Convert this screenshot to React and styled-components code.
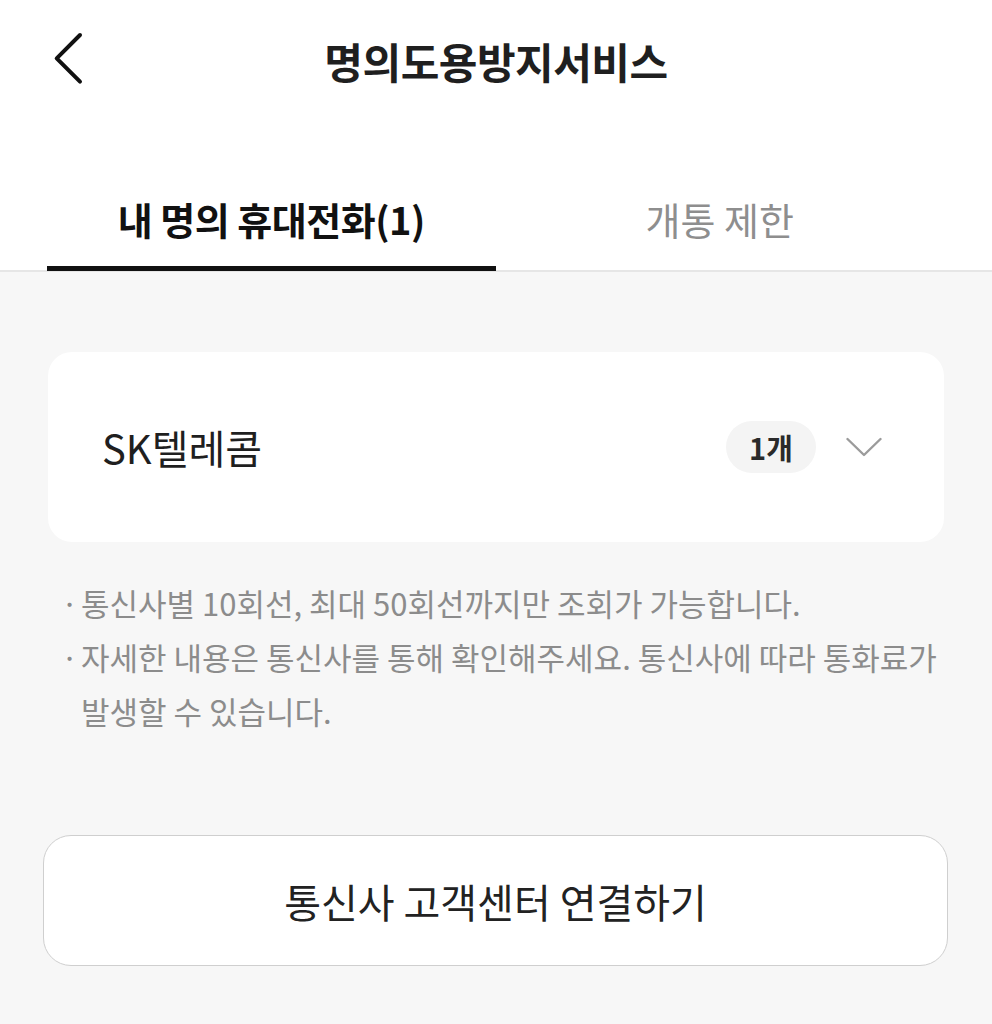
import React, { useState } from 'react';
import styled, { createGlobalStyle } from 'styled-components';

const GlobalStyle = createGlobalStyle`
  html, body {
    margin: 0;
    padding: 0;
    background: #f7f7f7;
  }
  body {
    font-family: "Noto Sans CJK KR", "Noto Sans", sans-serif;
    color: #1f1f1f;
  }
`;

const tabs = ['내 명의 휴대전화(1)', '개통 제한'];

const notes = [
  '통신사별 10회선, 최대 50회선까지만 조회가 가능합니다.',
  '자세한 내용은 통신사를 통해 확인해주세요. 통신사에 따라 통화료가 발생할 수 있습니다.',
];

function App() {
  const [active, setActive] = useState(0);

  return (
    <Page>
      <GlobalStyle />
      <Top>
        <Header>
          <BackButton aria-label="뒤로">
            <svg width="40" height="60" viewBox="0 0 40 60" fill="none">
              <path
                d="M36 9 L12.7 32.3 L36 55.7"
                stroke="#111"
                strokeWidth="4"
                strokeLinecap="round"
                strokeLinejoin="round"
              />
            </svg>
          </BackButton>
          <Title>명의도용방지서비스</Title>
        </Header>
        <TabBar>
          {tabs.map((label, i) => (
            <Tab key={label} $active={active === i} onClick={() => setActive(i)}>
              {label}
            </Tab>
          ))}
        </TabBar>
      </Top>

      <Content>
        <CarrierCard>
          <CarrierName>SK텔레콤</CarrierName>
          <CardRight>
            <CountBadge>1개</CountBadge>
            <svg width="36" height="20" viewBox="0 0 36 20" fill="none">
              <path
                d="M1.5 2 L18 18 L34.5 2"
                stroke="#9b9b9b"
                strokeWidth="2.4"
                strokeLinecap="round"
                strokeLinejoin="round"
              />
            </svg>
          </CardRight>
        </CarrierCard>

        <NoteList>
          {notes.map((n) => (
            <Note key={n}>{n}</Note>
          ))}
        </NoteList>

        <OutlineButton>통신사 고객센터 연결하기</OutlineButton>
      </Content>
    </Page>
  );
}

export default App;

const Page = styled.div`
  width: 992px;
  min-height: 1024px;
  background: #f7f7f7;
`;

const Top = styled.div`
  background: #fff;
`;

const Header = styled.header`
  position: relative;
  height: 120px;
  display: flex;
  align-items: center;
  justify-content: center;
`;

const BackButton = styled.button`
  position: absolute;
  left: 44px;
  top: 26px;
  padding: 0;
  border: 0;
  background: none;
  display: flex;
`;

const Title = styled.h1`
  margin: 0;
  font-size: 42px;
  font-weight: 700;
  color: #1f1f1f;
  letter-spacing: -0.5px;
`;

const TabBar = styled.nav`
  display: flex;
  padding: 0 48px 0 47px;
  height: 150px;
  border-bottom: 2px solid #e6e6e6;
`;

const Tab = styled.button`
  flex: 1;
  display: flex;
  align-items: flex-end;
  justify-content: center;
  padding: 0 0 22px;
  border: 0;
  background: none;
  font-family: inherit;
  font-size: 38px;
  line-height: 50px;
  font-weight: ${({ $active }) => ($active ? 700 : 400)};
  color: ${({ $active }) => ($active ? '#111' : '#8e8e8e')};
  letter-spacing: ${({ $active }) => ($active ? '-0.5px' : '0')};
  border-bottom: 5px solid ${({ $active }) => ($active ? '#111' : 'transparent')};
  margin-bottom: -1px;
  cursor: pointer;
`;

const Content = styled.main`
  padding: 80px 44px 60px 48px;
`;

const CarrierCard = styled.section`
  height: 190px;
  background: #fff;
  border-radius: 24px;
  display: flex;
  align-items: center;
  justify-content: space-between;
  padding: 0 62px 0 54px;
  box-sizing: border-box;
  margin-right: 4px;
`;

const CarrierName = styled.span`
  font-size: 40px;
  color: #1f1f1f;
`;

const CardRight = styled.div`
  display: flex;
  align-items: center;
  gap: 30px;
`;

const CountBadge = styled.span`
  height: 52px;
  width: 90px;
  border-radius: 26px;
  background: #f4f4f4;
  display: flex;
  align-items: center;
  justify-content: center;
  font-size: 29px;
  font-weight: 700;
  color: #2a2a2a;
`;

const NoteList = styled.ul`
  list-style: none;
  margin: 34px 0 0;
  padding: 0 0 0 13px;
`;

const Note = styled.li`
  position: relative;
  padding-left: 20px;
  font-size: 31px;
  line-height: 54px;
  color: #8c8c8c;
  word-break: keep-all;

  &::before {
    content: '·';
    position: absolute;
    left: 0;
  }
`;

const OutlineButton = styled.button`
  display: flex;
  align-items: center;
  justify-content: center;
  width: calc(100% + 5px);
  margin: 97px 0 0 -5px;
  height: 131px;
  border: 1.5px solid #cfcfcf;
  border-radius: 28px;
  background: #fff;
  font-family: inherit;
  font-size: 40px;
  color: #222;
  cursor: pointer;
`;
